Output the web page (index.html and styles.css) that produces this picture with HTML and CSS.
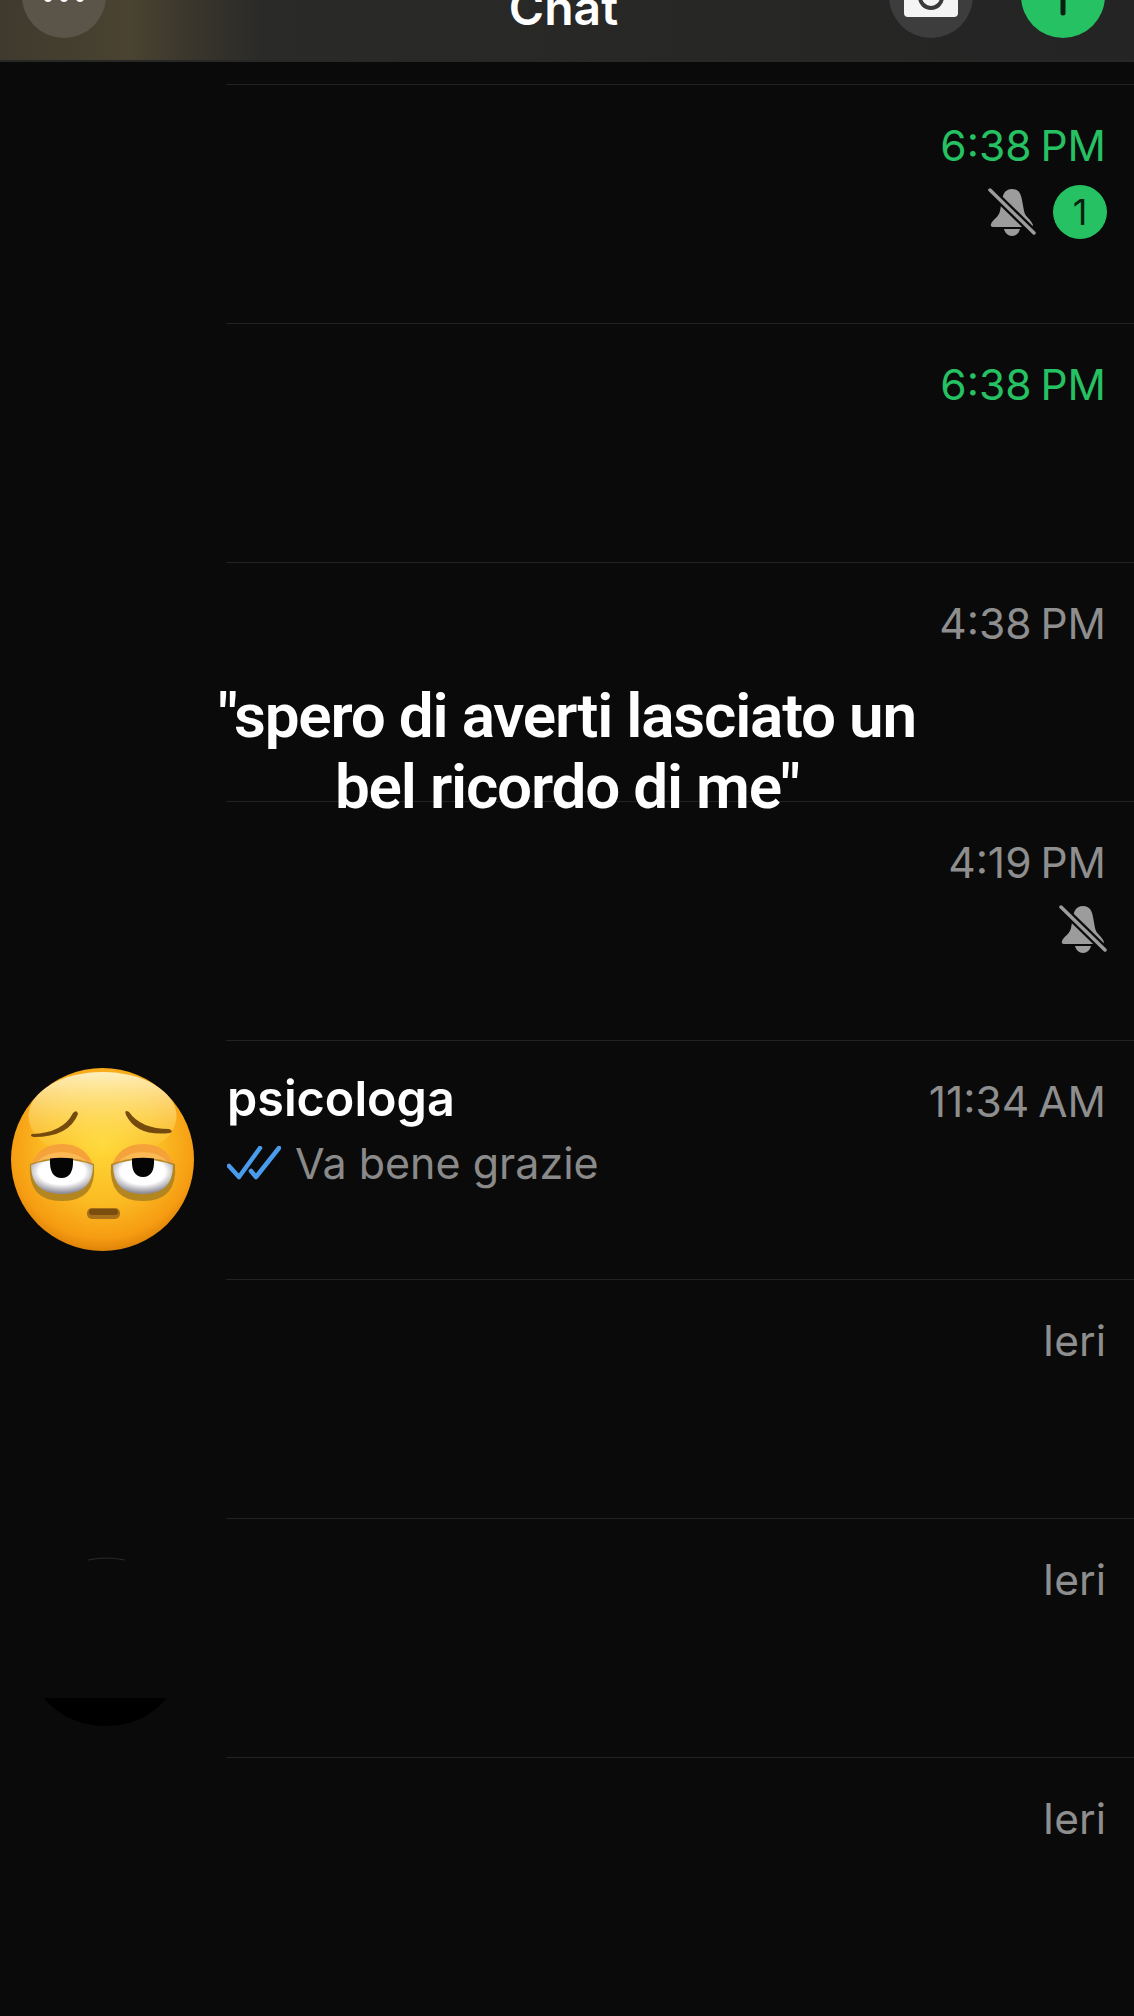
FILE: index.html
```html
<!DOCTYPE html>
<html>
<head>
  <meta charset="UTF-8">
  <title>Chat</title>
  <link rel="stylesheet" href="styles.css">
</head>
<body>

<header class="topbar">
  <div class="round-btn more-btn"><i></i><i></i><i></i></div>
  <div class="title">Chat</div>
  <div class="topbar-actions">
    <div class="round-btn camera-btn">
      <svg width="54" height="54" viewBox="0 0 54 54">
        <path d="M15 3 L20 0 H34 L39 3 H49 Q54 3 54 8 V44 Q54 48 50 48 H4 Q0 48 0 44 V8 Q0 3 5 3 Z" fill="#f4f4f4"/>
        <circle cx="27" cy="28" r="11" fill="none" stroke="#3a3a3a" stroke-width="4"/>
      </svg>
    </div>
    <div class="round-btn add-btn">
      <svg width="44" height="44" viewBox="0 0 44 44">
        <path d="M22 5 V39 M5 22 H39" stroke="#0a1f12" stroke-width="5" stroke-linecap="round"/>
      </svg>
    </div>
  </div>
</header>

<main class="chat-list">

  <div class="row">
    <div class="avatar"></div>
    <div class="row-body">
      <div class="row-text"></div>
      <div class="row-meta">
        <div class="time unread">6:38 PM</div>
        <div class="status">
          <svg class="bell" width="48" height="48" viewBox="0 0 48 48">
            <path d="M24 1 C31 1 33 6 34 12 L36 23 C37 29 43 31 45 37 Q45 39 43 39 H5 Q2 39 3 36 C5 31 11 29 12 23 L14 12 C15 6 17 1 24 1 Z" fill="#9c9c9c"/>
            <path d="M16 41 H32 C31 45 28 48 24 48 C20 48 17 45 16 41 Z" fill="#9c9c9c"/>
            <path d="M2 2 L46 45" stroke="#0a0a0a" stroke-width="8"/>
            <path d="M2 2 L46 45" stroke="#9c9c9c" stroke-width="3.5" stroke-linecap="round"/>
          </svg>
          <span class="badge">1</span>
        </div>
      </div>
    </div>
  </div>

  <div class="row">
    <div class="avatar"></div>
    <div class="row-body">
      <div class="row-text"></div>
      <div class="row-meta"><div class="time unread">6:38 PM</div></div>
    </div>
  </div>

  <div class="row">
    <div class="avatar"></div>
    <div class="row-body">
      <div class="row-text"></div>
      <div class="row-meta"><div class="time">4:38 PM</div></div>
    </div>
  </div>

  <div class="row">
    <div class="avatar"></div>
    <div class="row-body">
      <div class="row-text"></div>
      <div class="row-meta">
        <div class="time">4:19 PM</div>
        <div class="status">
          <svg class="bell" width="48" height="48" viewBox="0 0 48 48">
            <path d="M24 1 C31 1 33 6 34 12 L36 23 C37 29 43 31 45 37 Q45 39 43 39 H5 Q2 39 3 36 C5 31 11 29 12 23 L14 12 C15 6 17 1 24 1 Z" fill="#9c9c9c"/>
            <path d="M16 41 H32 C31 45 28 48 24 48 C20 48 17 45 16 41 Z" fill="#9c9c9c"/>
            <path d="M2 2 L46 45" stroke="#0a0a0a" stroke-width="8"/>
            <path d="M2 2 L46 45" stroke="#9c9c9c" stroke-width="3.5" stroke-linecap="round"/>
          </svg>
        </div>
      </div>
    </div>
  </div>

  <div class="row">
    <div class="avatar">
      <svg class="emoji" width="184" height="184" viewBox="0 0 184 184">
        <defs>
          <radialGradient id="skin" cx="50%" cy="42%" r="60%">
            <stop offset="0" stop-color="#ffd836"/>
            <stop offset="0.55" stop-color="#fbb922"/>
            <stop offset="0.85" stop-color="#f69c12"/>
            <stop offset="1" stop-color="#d97c06"/>
          </radialGradient>
          <linearGradient id="shine" x1="0" y1="0" x2="0" y2="1">
            <stop offset="0" stop-color="#fff6d0" stop-opacity="0.9"/>
            <stop offset="1" stop-color="#ffe65a" stop-opacity="0"/>
          </linearGradient>
          <radialGradient id="white" cx="50%" cy="35%" r="62%">
            <stop offset="0.6" stop-color="#ffffff"/>
            <stop offset="1" stop-color="#8f8e9a"/>
          </radialGradient>
        </defs>
        <circle cx="91.5" cy="91.5" r="91.5" fill="url(#skin)"/>
        <ellipse cx="91.5" cy="48" rx="74" ry="44" fill="url(#shine)"/>
        <!-- brows -->
        <path d="M21 66 Q52 65 62 45 Q66 41 67 46 Q58 69 23 69 Q18 68 21 66 Z" fill="#744a0e"/>
        <path d="M115 47 Q113 41 118 44 Q130 61 158 61 Q163 63 159 65 Q126 69 115 47 Z" fill="#744a0e"/>
        <!-- left eye -->
        <path d="M19 100 Q26 76 51 76 Q76 76 83 100 Z" fill="#f6a23a"/>
        <path d="M26 94 Q36 84 51 84 Q66 84 76 94 L76 100 H26 Z" fill="#fbb955"/>
        <path d="M19 96 Q51 84 83 96 Q86 133 51 133 Q16 133 19 96 Z" fill="#b4861f"/>
        <path d="M20 97 Q51 86 82 97 Q82 126 51 126 Q20 126 20 97 Z" fill="url(#white)"/>
        <path d="M39 90.5 Q50 89 62 90.5 Q63 110 50.5 110 Q38 110 39 90.5 Z" fill="#050505"/>
        <!-- right eye -->
        <path d="M100 100 Q107 76 132 76 Q157 76 164 100 Z" fill="#f6a23a"/>
        <path d="M107 94 Q117 84 132 84 Q147 84 157 94 L157 100 H107 Z" fill="#fbb955"/>
        <path d="M100 96 Q132 84 164 96 Q167 133 132 133 Q97 133 100 96 Z" fill="#b4861f"/>
        <path d="M102 97 Q132 86 162 97 Q162 126 132 126 Q102 126 102 97 Z" fill="url(#white)"/>
        <path d="M121 90.5 Q132 89 143 90.5 Q144 109 132 109 Q120 109 121 90.5 Z" fill="#050505"/>
        <!-- mouth -->
        <rect x="76" y="140" width="33" height="11" rx="5" fill="#a8701a"/>
        <rect x="78" y="141" width="29" height="6" rx="3" fill="#7b4e0e"/>
      </svg>
    </div>
    <div class="row-body">
      <div class="row-text">
        <div class="name">psicologa</div>
        <div class="preview">
          <svg class="ticks" width="54" height="34" viewBox="0 0 54 34">
            <path d="M2 20 L12 31 L33 2 M24 25 L29 31 L52 2" fill="none" stroke="#4a9bec" stroke-width="4.5" stroke-linecap="round" stroke-linejoin="round"/>
          </svg>
          <span>Va bene grazie</span>
        </div>
      </div>
      <div class="row-meta"><div class="time">11:34 AM</div></div>
    </div>
  </div>

  <div class="row">
    <div class="avatar"></div>
    <div class="row-body">
      <div class="row-text"></div>
      <div class="row-meta"><div class="time">Ieri</div></div>
    </div>
  </div>

  <div class="row">
    <div class="avatar">
      <svg width="226" height="239" viewBox="0 0 226 239">
        <path d="M88 42 Q106 38 125 42" fill="none" stroke="#2a2a2a" stroke-width="1"/>
        <path d="M44 180 H167 C150 200 128 208 106 208 C84 208 60 200 44 180 Z" fill="#000"/>
      </svg>
    </div>
    <div class="row-body">
      <div class="row-text"></div>
      <div class="row-meta"><div class="time">Ieri</div></div>
    </div>
  </div>

  <div class="row">
    <div class="avatar"></div>
    <div class="row-body">
      <div class="row-text"></div>
      <div class="row-meta"><div class="time">Ieri</div></div>
    </div>
  </div>

</main>

<div class="caption">"spero di averti lasciato un<br>bel ricordo di me"</div>

</body>
</html>
```

FILE: styles.css
```css
html, body {
  margin: 0;
  padding: 0;
}
body {
  position: relative;
  height: 2016px;
  overflow: hidden;
  background: #0a0a0a;
  font-family: "Inter", "Liberation Sans", sans-serif;
  color: #fff;
}

/* top bar, cut by the top of the screen */
.topbar {
  height: 62px;
  box-sizing: border-box;
  display: flex;
  justify-content: space-between;
  align-items: flex-end;
  padding: 0 29px 22px 22px;
  overflow: hidden;
  border-bottom: 2px solid #282827;
  background: linear-gradient(90deg, #3f3a2e 0, #4a4331 130px, #3a362c 190px, #2a2a28 264px, #242424 100%);
}
.round-btn {
  flex: none;
  width: 84px;
  height: 84px;
  border-radius: 50%;
  display: flex;
  align-items: center;
  justify-content: center;
}
.more-btn {
  background: #5a5548;
  gap: 8px;
}
.more-btn i {
  width: 8px;
  height: 8px;
  margin-top: 4px;
  border-radius: 50%;
  background: #fff;
}
.title {
  font-size: 48px;
  font-weight: 600;
  line-height: 56px;
  margin-left: 132px;
  margin-bottom: 2px;
}
.topbar-actions {
  display: flex;
  gap: 48px;
}
.camera-btn {
  background: #3d3d3d;
}
.add-btn {
  background: #25c162;
}

/* chat rows */
.chat-list {
  padding-top: 22px;
}
.row {
  height: 239px;
  display: flex;
}
.avatar {
  flex: none;
  width: 226px;
  display: flex;
  align-items: center;
}
.emoji {
  margin-left: 11px;
}
.row-body {
  flex: 1;
  display: flex;
  justify-content: space-between;
  border-top: 1px solid #222;
  padding: 36px 28px 0 1px;
}
.name {
  font-size: 48.5px;
  font-weight: 600;
  line-height: 52px;
  margin-top: -4px;
}
.preview {
  display: flex;
  align-items: center;
  gap: 14px;
  margin-top: 13px;
  font-size: 43px;
  line-height: 50px;
  color: #8a8a8a;
}
.ticks {
  flex: none;
}
.row-meta {
  display: flex;
  flex-direction: column;
  align-items: flex-end;
}
.time {
  font-size: 42.5px;
  line-height: 50px;
  color: #8e8e8e;
  word-spacing: -3px;
}
.time.unread {
  color: #25c162;
}
.status {
  display: flex;
  align-items: center;
  gap: 17px;
  height: 48px;
  margin-top: 17px;
  margin-right: -1px;
}
.bell {
  flex: none;
}
.badge {
  width: 54px;
  height: 54px;
  border-radius: 50%;
  background: #25c162;
  color: #07210f;
  font-size: 36px;
  line-height: 54px;
  text-align: center;
}

/* video caption lying over the list */
.caption {
  position: absolute;
  left: 0;
  right: 0;
  top: 680px;
  text-align: center;
  font-family: "Roboto", "Liberation Sans", sans-serif;
  font-size: 62px;
  font-weight: 600;
  line-height: 71px;
  letter-spacing: -1.2px;
}
```
